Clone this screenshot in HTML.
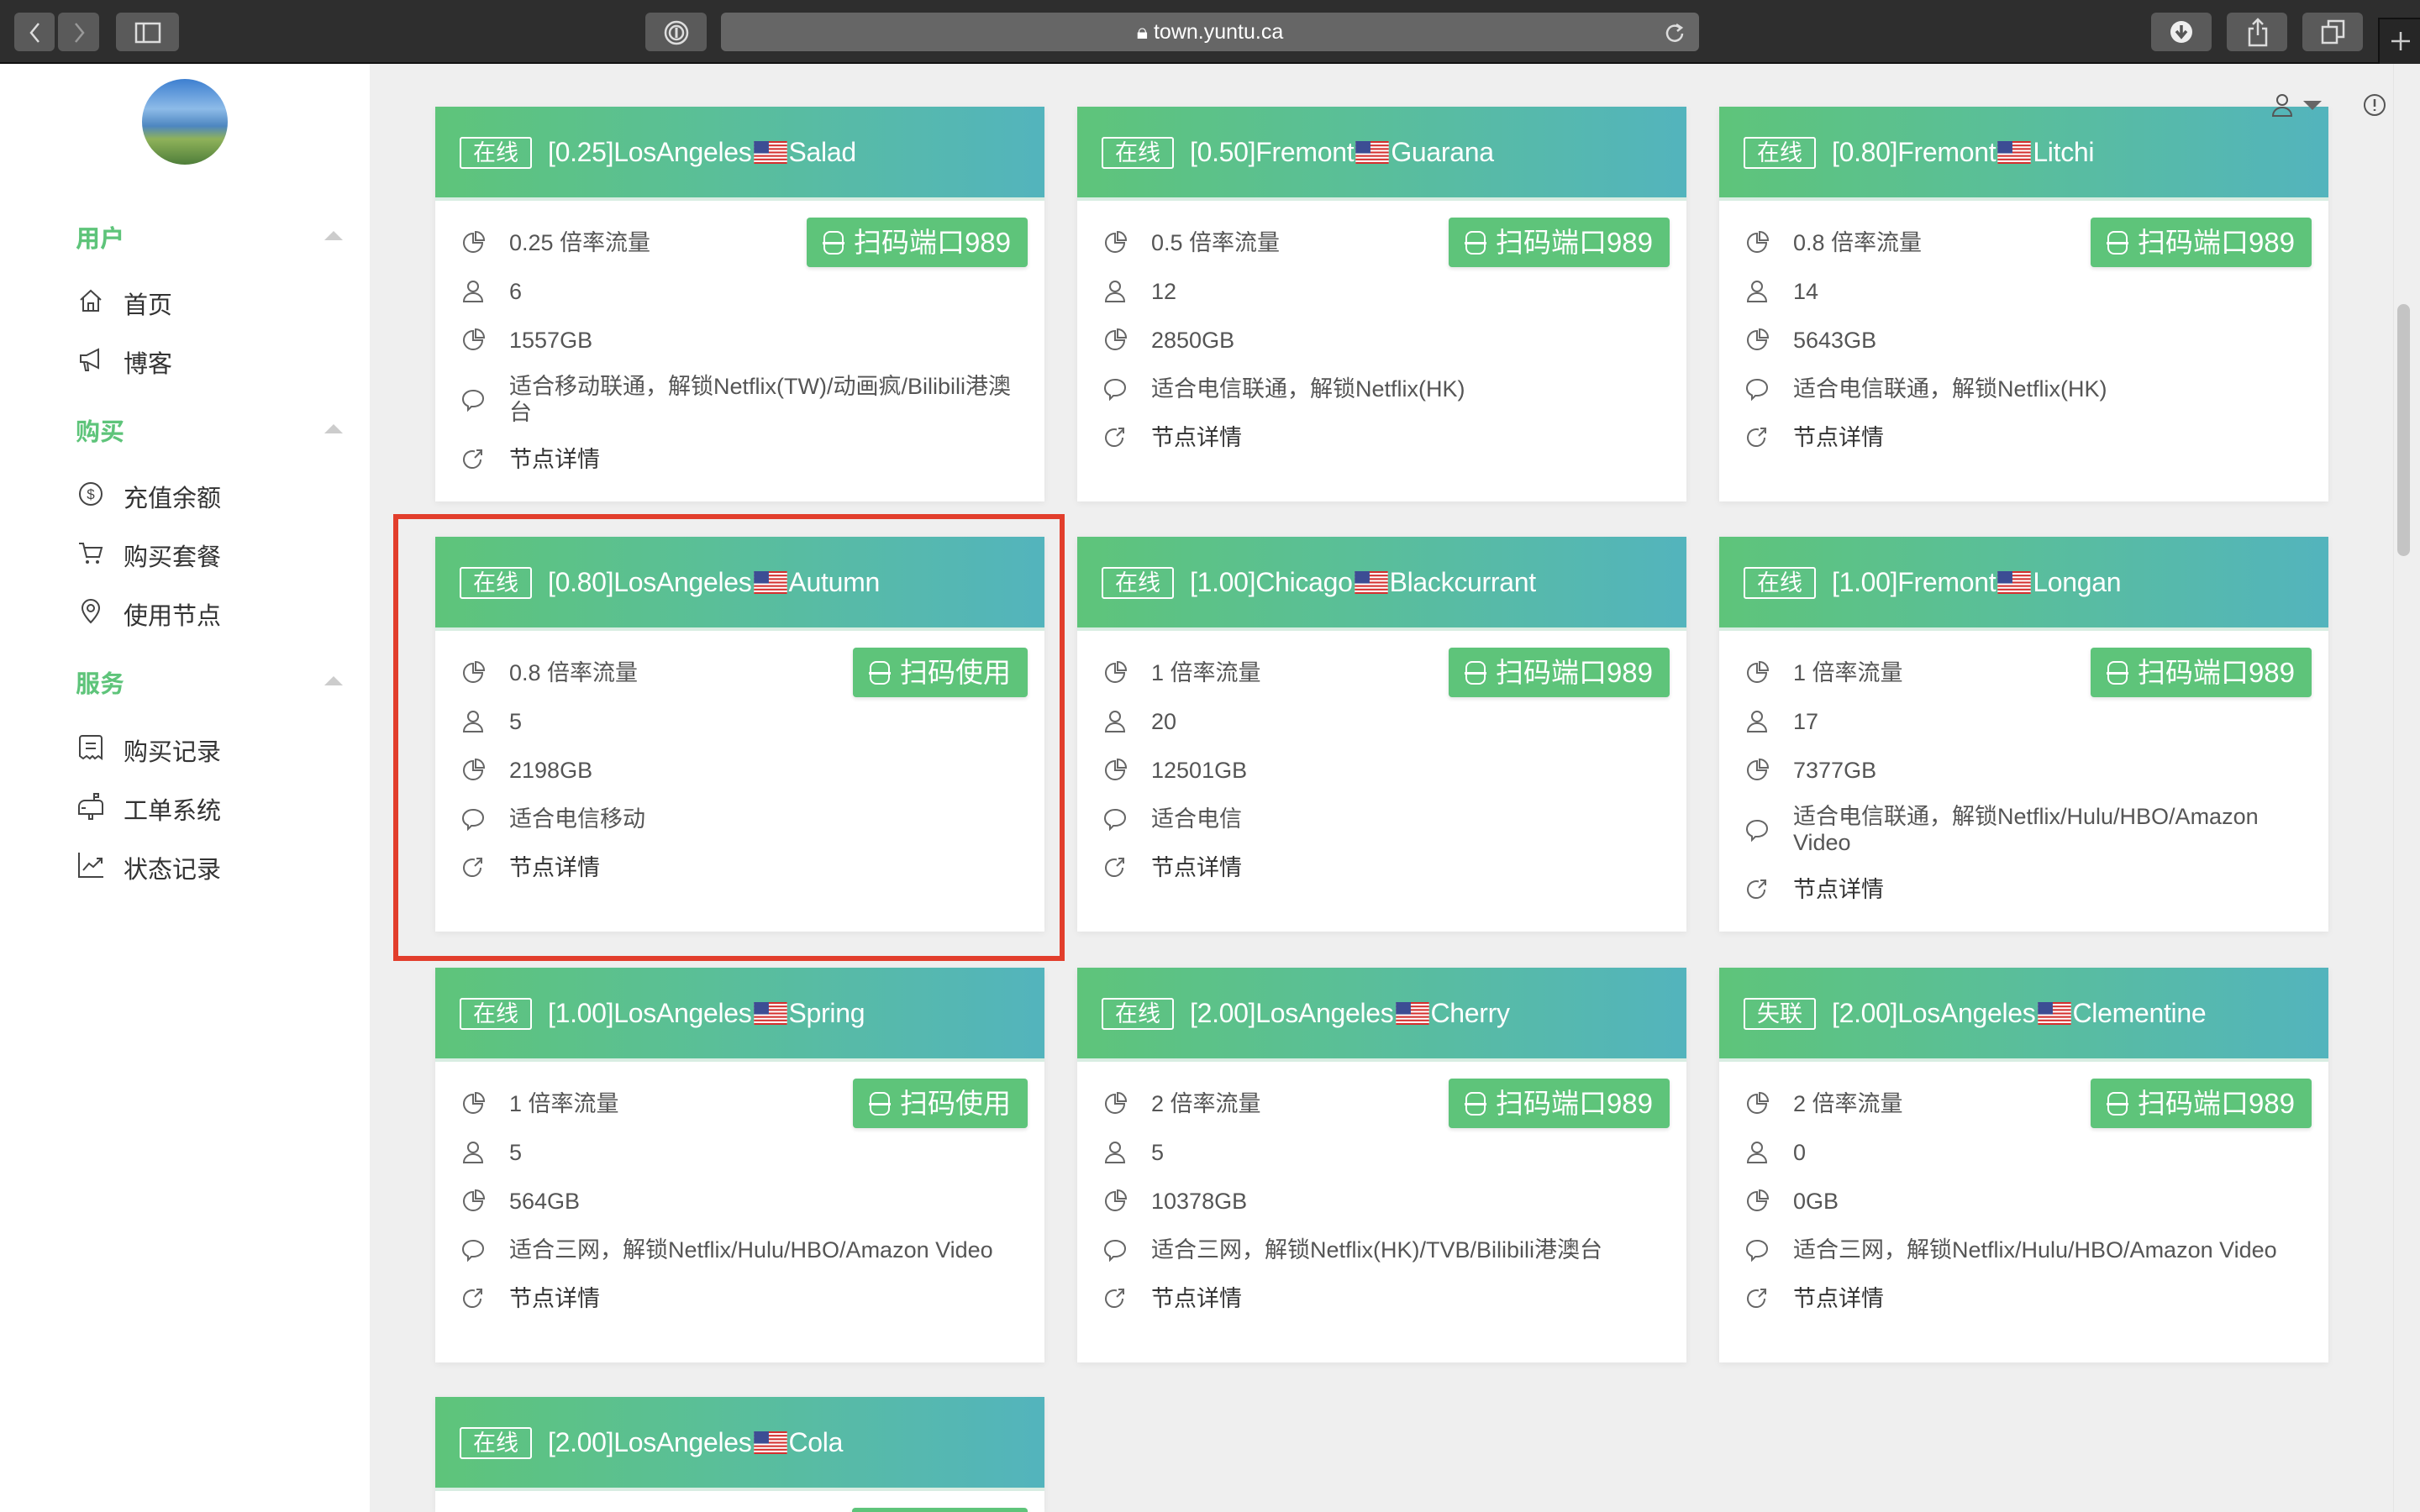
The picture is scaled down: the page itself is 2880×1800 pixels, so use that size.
<!DOCTYPE html>
<html><head><meta charset="utf-8">
<style>
*{margin:0;padding:0;box-sizing:border-box}
html,body{width:2880px;height:1800px;overflow:hidden}
body{background:#efefef;font-family:"Liberation Sans","Noto Sans CJK SC",sans-serif;position:relative}
.tb{position:absolute;left:0;top:0;width:2880px;height:76px;background:#2e2e2e;border-bottom:2px solid #111}
.bt{position:absolute;top:15px;height:46px;background:#5a5a5a;border-radius:6px}
.url{position:absolute;left:858px;top:15px;width:1164px;height:46px;background:#666;border-radius:6px;color:#fff;font-size:25px;line-height:46px;text-align:center}
.side{position:absolute;left:0;top:76px;width:440px;height:1724px;background:#fff}
.av{position:absolute;left:169px;top:18px;width:102px;height:102px;border-radius:50%;background:linear-gradient(180deg,#3d7fd0 0%,#8dbbe8 35%,#4d86c0 55%,#8fb25a 70%,#4f7e3a 100%)}
.sec{position:absolute;left:90px;font-size:29px;font-weight:bold;color:#5ec47a}
.tri{position:absolute;left:386px;width:0;height:0;border-left:11px solid transparent;border-right:11px solid transparent;border-bottom:11px solid #ccc}
.it{position:absolute;left:147px;font-size:29px;color:#333}
.ic{position:absolute;left:92px;width:32px;height:32px}
.card{position:absolute;width:725px;height:470px;background:#fff;box-shadow:0 2px 8px rgba(0,0,0,.06);overflow:hidden}
.hd{height:112px;background:linear-gradient(90deg,#5ec47a,#5abf98 45%,#53b4bd);border-bottom:4px solid #d8ede2;position:relative}
.bd{position:absolute;left:29px;top:36px;height:38px;border:2px solid #fff;border-radius:3px;color:#fff;font-size:27px;line-height:34px;text-align:center;width:86px}
.ti{position:absolute;left:134px;top:34px;color:#fff;font-size:32px;line-height:40px;white-space:nowrap;letter-spacing:-0.3px}
.fl{display:inline-block;width:40px;height:27px;vertical-align:-3px;margin:0 2px}
.rows{position:absolute;left:0;top:112px;width:100%;padding-top:21px}
.r{display:flex;align-items:center;padding:11px 0 11px 30px;font-size:27px;color:#555;line-height:36px;min-height:58px}
.r svg{width:30px;height:30px;flex:none;margin-right:28px}
.r .m{line-height:31px;padding-right:20px}
.r.d{color:#333}
.btn{position:absolute;right:20px;top:132px;height:59px;background:#5ec47a;border-radius:4px;color:#fff;font-size:33px;line-height:59px;padding:0 20px;box-shadow:0 2px 5px rgba(0,0,0,.12);white-space:nowrap}
.btn i{display:inline-block;width:24px;height:28px;border:2.5px solid #fff;border-radius:8px;vertical-align:-3px;margin-right:12px;position:relative}
.btn i:before{content:"";position:absolute;left:-3px;right:-3px;top:11px;height:2.5px;background:#fff}
.top{z-index:5}
</style></head><body>
<svg width="0" height="0" style="position:absolute"><defs>
<symbol id="pie" viewBox="0 0 30 30"><path d="M15 4a11 11 0 1 0 11 11H15z" fill="none" stroke="#666" stroke-width="2"/><path d="M18 2v10h10A10 10 0 0 0 18 2z" fill="none" stroke="#666" stroke-width="2"/></symbol>
<symbol id="usr" viewBox="0 0 30 30"><circle cx="15" cy="9" r="6" fill="none" stroke="#666" stroke-width="2"/><path d="M4 27c0-6 5-10 11-10s11 4 11 10z" fill="none" stroke="#666" stroke-width="2"/></symbol>
<symbol id="msg" viewBox="0 0 30 30"><path d="M15 4C8 4 3 8.5 3 14c0 4 2.5 7 6 8.5V27l4-4h2c7 0 12-4 12-9.5S22 4 15 4z" fill="none" stroke="#666" stroke-width="2"/></symbol>
<symbol id="lnk" viewBox="0 0 30 30"><path d="M24 15a10 10 0 1 1-7-9.5" fill="none" stroke="#666" stroke-width="2"/><path d="M17 13l8-8M19 4h6v6" fill="none" stroke="#666" stroke-width="2"/></symbol>
<symbol id="flag" viewBox="0 0 38 26"><rect width="38" height="26" fill="#fff"/><g fill="#d4302f"><rect y="0" width="38" height="2"/><rect y="4" width="38" height="2"/><rect y="8" width="38" height="2"/><rect y="12" width="38" height="2"/><rect y="16" width="38" height="2"/><rect y="20" width="38" height="2"/><rect y="24" width="38" height="2"/></g><rect width="17" height="14" fill="#3c4d94"/></symbol>
</defs></svg>

<div class="tb">
<div class="bt" style="left:17px;width:48px"></div><div class="bt" style="left:69px;width:49px"></div>
<svg style="position:absolute;left:32px;top:26px" width="20" height="26"><path d="M14 2L5 13l9 11" stroke="#ddd" stroke-width="2.5" fill="none"/></svg>
<svg style="position:absolute;left:84px;top:26px" width="20" height="26"><path d="M6 2l9 11-9 11" stroke="#999" stroke-width="2.5" fill="none"/></svg>
<div class="bt" style="left:138px;width:75px"></div>
<svg style="position:absolute;left:160px;top:26px" width="32" height="26"><rect x="2" y="2" width="28" height="22" stroke="#ddd" stroke-width="2.5" fill="none"/><path d="M11 2v22" stroke="#ddd" stroke-width="2.5"/></svg>
<div class="bt" style="left:768px;width:73px"></div>
<svg style="position:absolute;left:789px;top:23px" width="32" height="32"><circle cx="16" cy="16" r="13" stroke="#ddd" stroke-width="2.5" fill="none"/><circle cx="16" cy="16" r="8" stroke="#ddd" stroke-width="2.5" fill="none"/><path d="M16 10v12" stroke="#ddd" stroke-width="3"/></svg>
<div class="url">🔒︎ town.yuntu.ca<svg style="position:absolute;right:16px;top:11px" width="26" height="26"><path d="M20 8a9 9 0 1 0 2 6" stroke="#ddd" stroke-width="2.5" fill="none"/><path d="M15 3l6 4-5 4" stroke="#ddd" stroke-width="2.5" fill="none"/></svg></div>
<div class="bt" style="left:2560px;width:72px"></div><div class="bt" style="left:2650px;width:72px"></div><div class="bt" style="left:2740px;width:72px"></div>
<svg style="position:absolute;left:2582px;top:24px" width="28" height="28"><circle cx="14" cy="14" r="13" fill="#eee"/><path d="M14 6v13M8 13l6 7 6-7" stroke="#555" stroke-width="3.5" fill="none"/></svg>
<svg style="position:absolute;left:2674px;top:20px" width="26" height="36"><path d="M8 14H3v20h20V14h-5M13 22V3M7 9l6-6 6 6" stroke="#ddd" stroke-width="2.5" fill="none"/></svg>
<svg style="position:absolute;left:2762px;top:23px" width="30" height="30"><rect x="2" y="9" width="17" height="19" stroke="#ddd" stroke-width="2.5" fill="none"/><path d="M9 9V2h18v19h-8" stroke="#ddd" stroke-width="2.5" fill="none"/></svg>
<div style="position:absolute;left:2830px;top:21px;width:50px;height:55px;border-left:2px solid #111;border-top:2px solid #111;background:#262626"></div>
<svg style="position:absolute;left:2844px;top:36px" width="26" height="26"><path d="M13 2v22M2 13h22" stroke="#ccc" stroke-width="2.5"/></svg>
</div>

<div class="side">
<div class="av"></div>
<div class="sec" style="top:185px">用户</div><div class="tri" style="top:199px"></div>
<svg class="ic" style="top:266px" viewBox="0 0 32 32"><path d="M4 15L16 4l12 11M7 12v16h18V12M13 28v-9h6v9" stroke="#444" stroke-width="2" fill="none"/></svg>
<div class="it" style="top:264px">首页</div>
<svg class="ic" style="top:336px" viewBox="0 0 32 32"><path d="M4 11h7l14-7v22l-14-7H4zM8 19l2 10h3l-1-10" stroke="#444" stroke-width="2" fill="none"/></svg>
<div class="it" style="top:334px">博客</div>
<div class="sec" style="top:415px">购买</div><div class="tri" style="top:429px"></div>
<svg class="ic" style="top:496px" viewBox="0 0 32 32"><circle cx="16" cy="16" r="13" stroke="#444" stroke-width="2" fill="none"/><text x="16" y="22" font-size="17" text-anchor="middle" fill="#444" font-family="Liberation Sans">$</text></svg>
<div class="it" style="top:494px">充值余额</div>
<svg class="ic" style="top:566px" viewBox="0 0 32 32"><path d="M2 5h5l4 16h15l3-11H9" stroke="#444" stroke-width="2" fill="none"/><circle cx="12" cy="27" r="2" fill="#444"/><circle cx="24" cy="27" r="2" fill="#444"/></svg>
<div class="it" style="top:564px">购买套餐</div>
<svg class="ic" style="top:636px" viewBox="0 0 32 32"><path d="M16 29s10-10 10-17a10 10 0 0 0-20 0c0 7 10 17 10 17z" stroke="#444" stroke-width="2" fill="none"/><circle cx="16" cy="12" r="4" stroke="#444" stroke-width="2" fill="none"/></svg>
<div class="it" style="top:634px">使用节点</div>
<div class="sec" style="top:715px">服务</div><div class="tri" style="top:729px"></div>
<svg class="ic" style="top:798px" viewBox="0 0 32 32"><path d="M3 5a3 3 0 0 1 3-3h20a3 3 0 0 1 3 3v24l-4-3-4 3-3-3-3 3-4-3-4 3-4-3z" stroke="#444" stroke-width="2" fill="none"/><path d="M10 11h12M10 17h12" stroke="#444" stroke-width="2"/></svg>
<div class="it" style="top:796px">购买记录</div>
<svg class="ic" style="top:868px" viewBox="0 0 32 32"><path d="M9 9h17a4 4 0 0 1 4 4v12H2V16a7 7 0 0 1 7-7zM14 25v6h4v-6M20 9V1h5v4h-5" stroke="#444" stroke-width="2" fill="none"/><path d="M5 18h5" stroke="#444" stroke-width="2"/></svg>
<div class="it" style="top:866px">工单系统</div>
<svg class="ic" style="top:938px" viewBox="0 0 32 32"><path d="M2 1v29h29M7 22l7-8 5 4 10-10M23 8h6v6" stroke="#444" stroke-width="2" fill="none"/></svg>
<div class="it" style="top:936px">状态记录</div>
</div>

<div style="position:absolute;left:2853px;top:362px;width:15px;height:300px;background:#c4c4c4;border-radius:8px"></div>
<div style="position:absolute;left:2848px;top:76px;width:1px;height:1724px;background:#e4e4e4"></div>

<!-- Row 1 -->
<div class="card" style="left:518px;top:127px"><div class="hd"><div class="bd">在线</div><div class="ti">[0.25]LosAngeles<svg class="fl"><use href="#flag"/></svg>Salad</div></div>
<div class="btn"><i></i>扫码端口989</div>
<div class="rows"><div class="r"><svg><use href="#pie"/></svg>0.25 倍率流量</div><div class="r"><svg><use href="#usr"/></svg>6</div><div class="r"><svg><use href="#pie"/></svg>1557GB</div><div class="r"><svg><use href="#msg"/></svg><span class="m">适合移动联通，解锁Netflix(TW)/动画疯/Bilibili港澳台</span></div><div class="r d"><svg><use href="#lnk"/></svg>节点详情</div></div></div>

<div class="card" style="left:1282px;top:127px"><div class="hd"><div class="bd">在线</div><div class="ti">[0.50]Fremont<svg class="fl"><use href="#flag"/></svg>Guarana</div></div>
<div class="btn"><i></i>扫码端口989</div>
<div class="rows"><div class="r"><svg><use href="#pie"/></svg>0.5 倍率流量</div><div class="r"><svg><use href="#usr"/></svg>12</div><div class="r"><svg><use href="#pie"/></svg>2850GB</div><div class="r"><svg><use href="#msg"/></svg><span class="m">适合电信联通，解锁Netflix(HK)</span></div><div class="r d"><svg><use href="#lnk"/></svg>节点详情</div></div></div>

<div class="card" style="left:2046px;top:127px"><div class="hd"><div class="bd">在线</div><div class="ti">[0.80]Fremont<svg class="fl"><use href="#flag"/></svg>Litchi</div></div>
<div class="btn"><i></i>扫码端口989</div>
<div class="rows"><div class="r"><svg><use href="#pie"/></svg>0.8 倍率流量</div><div class="r"><svg><use href="#usr"/></svg>14</div><div class="r"><svg><use href="#pie"/></svg>5643GB</div><div class="r"><svg><use href="#msg"/></svg><span class="m">适合电信联通，解锁Netflix(HK)</span></div><div class="r d"><svg><use href="#lnk"/></svg>节点详情</div></div></div>

<!-- Row 2 -->
<div class="card" style="left:518px;top:639px"><div class="hd"><div class="bd">在线</div><div class="ti">[0.80]LosAngeles<svg class="fl"><use href="#flag"/></svg>Autumn</div></div>
<div class="btn"><i></i>扫码使用</div>
<div class="rows"><div class="r"><svg><use href="#pie"/></svg>0.8 倍率流量</div><div class="r"><svg><use href="#usr"/></svg>5</div><div class="r"><svg><use href="#pie"/></svg>2198GB</div><div class="r"><svg><use href="#msg"/></svg><span class="m">适合电信移动</span></div><div class="r d"><svg><use href="#lnk"/></svg>节点详情</div></div></div>

<div class="card" style="left:1282px;top:639px"><div class="hd"><div class="bd">在线</div><div class="ti">[1.00]Chicago<svg class="fl"><use href="#flag"/></svg>Blackcurrant</div></div>
<div class="btn"><i></i>扫码端口989</div>
<div class="rows"><div class="r"><svg><use href="#pie"/></svg>1 倍率流量</div><div class="r"><svg><use href="#usr"/></svg>20</div><div class="r"><svg><use href="#pie"/></svg>12501GB</div><div class="r"><svg><use href="#msg"/></svg><span class="m">适合电信</span></div><div class="r d"><svg><use href="#lnk"/></svg>节点详情</div></div></div>

<div class="card" style="left:2046px;top:639px"><div class="hd"><div class="bd">在线</div><div class="ti">[1.00]Fremont<svg class="fl"><use href="#flag"/></svg>Longan</div></div>
<div class="btn"><i></i>扫码端口989</div>
<div class="rows"><div class="r"><svg><use href="#pie"/></svg>1 倍率流量</div><div class="r"><svg><use href="#usr"/></svg>17</div><div class="r"><svg><use href="#pie"/></svg>7377GB</div><div class="r"><svg><use href="#msg"/></svg><span class="m">适合电信联通，解锁Netflix/Hulu/HBO/Amazon Video</span></div><div class="r d"><svg><use href="#lnk"/></svg>节点详情</div></div></div>

<!-- Row 3 -->
<div class="card" style="left:518px;top:1152px"><div class="hd"><div class="bd">在线</div><div class="ti">[1.00]LosAngeles<svg class="fl"><use href="#flag"/></svg>Spring</div></div>
<div class="btn"><i></i>扫码使用</div>
<div class="rows"><div class="r"><svg><use href="#pie"/></svg>1 倍率流量</div><div class="r"><svg><use href="#usr"/></svg>5</div><div class="r"><svg><use href="#pie"/></svg>564GB</div><div class="r"><svg><use href="#msg"/></svg><span class="m" style="white-space:nowrap">适合三网，解锁Netflix/Hulu/HBO/Amazon Video</span></div><div class="r d"><svg><use href="#lnk"/></svg>节点详情</div></div></div>

<div class="card" style="left:1282px;top:1152px"><div class="hd"><div class="bd">在线</div><div class="ti">[2.00]LosAngeles<svg class="fl"><use href="#flag"/></svg>Cherry</div></div>
<div class="btn"><i></i>扫码端口989</div>
<div class="rows"><div class="r"><svg><use href="#pie"/></svg>2 倍率流量</div><div class="r"><svg><use href="#usr"/></svg>5</div><div class="r"><svg><use href="#pie"/></svg>10378GB</div><div class="r"><svg><use href="#msg"/></svg><span class="m" style="white-space:nowrap">适合三网，解锁Netflix(HK)/TVB/Bilibili港澳台</span></div><div class="r d"><svg><use href="#lnk"/></svg>节点详情</div></div></div>

<div class="card" style="left:2046px;top:1152px"><div class="hd"><div class="bd">失联</div><div class="ti">[2.00]LosAngeles<svg class="fl"><use href="#flag"/></svg>Clementine</div></div>
<div class="btn"><i></i>扫码端口989</div>
<div class="rows"><div class="r"><svg><use href="#pie"/></svg>2 倍率流量</div><div class="r"><svg><use href="#usr"/></svg>0</div><div class="r"><svg><use href="#pie"/></svg>0GB</div><div class="r"><svg><use href="#msg"/></svg><span class="m" style="white-space:nowrap">适合三网，解锁Netflix/Hulu/HBO/Amazon Video</span></div><div class="r d"><svg><use href="#lnk"/></svg>节点详情</div></div></div>

<!-- Row 4 -->
<div class="card" style="left:518px;top:1663px;height:137px"><div class="hd"><div class="bd">在线</div><div class="ti">[2.00]LosAngeles<svg class="fl"><use href="#flag"/></svg>Cola</div></div>
<div class="btn" style="width:209px"></div></div>

<div style="position:absolute;left:468px;top:612px;width:799px;height:532px;border:6px solid #e23e2c"></div>

<svg class="top" style="position:absolute;left:2702px;top:110px" width="28" height="30"><circle cx="14" cy="9" r="6" stroke="#555" stroke-width="2" fill="none"/><path d="M3 28c0-6 5-10 11-10s11 4 11 10z" stroke="#555" stroke-width="2" fill="none"/></svg>
<div class="top" style="position:absolute;left:2741px;top:120px;border-left:11px solid transparent;border-right:11px solid transparent;border-top:11px solid #666"></div>
<svg class="top" style="position:absolute;left:2812px;top:111px" width="28" height="28"><circle cx="14" cy="14" r="12" stroke="#555" stroke-width="2" fill="none"/><path d="M14 7v9M14 19v2" stroke="#555" stroke-width="2.5"/></svg>
</body></html>
